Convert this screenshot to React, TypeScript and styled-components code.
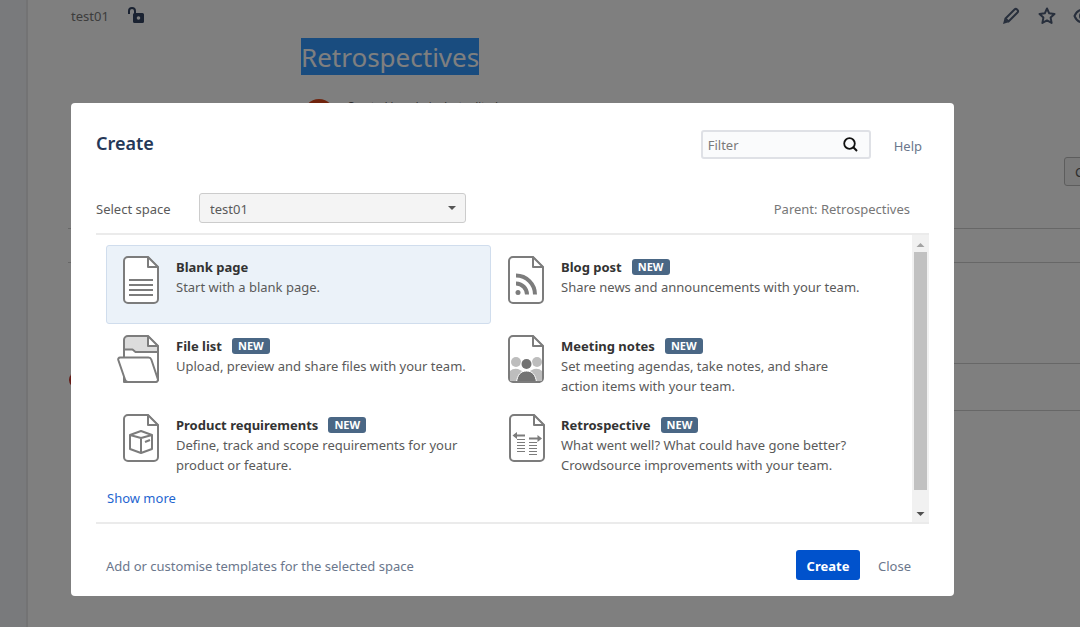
import React, { useState } from "react";
import styled, { createGlobalStyle } from "styled-components";

const GlobalStyle = createGlobalStyle`
  *, *::before, *::after { box-sizing: border-box; }
  body {
    margin: 0;
    overflow: hidden;
    background: #fff;
    color: #5a5a5a;
    font: 13px/20px "Noto Sans", "Open Sans", sans-serif;
  }
  button, input, select { font: inherit; color: inherit; }
  svg { display: block; flex: none; }
  a { text-decoration: none; }
`;

/* Page behind the dialog */

const Page = styled.div`
  display: grid;
  grid-template-columns: 28px 1fr;
  min-height: 100vh;
`;

const Sidebar = styled.aside`
  background: #f3f4f8;
  border-right: 2px solid #e6e7e9;
`;

const Main = styled.main`
  padding-left: 40px;
  min-width: 0;
  overflow: hidden;
`;

const TopBar = styled.header`
  display: flex;
  align-items: center;
  justify-content: space-between;
  height: 32px;
  padding-left: 3px;
  color: #42526e;
`;

const Breadcrumb = styled.div`
  display: flex;
  align-items: center;
  gap: 18px;

  a { color: #7a7a7a; }
  svg { margin-bottom: 2px; }
`;

const PageActions = styled.div`
  display: flex;
  gap: 16px;
  margin-right: -13px;
`;

const IconButton = styled.button`
  padding: 0;
  border: 0;
  background: none;
  color: #505f79;
`;

const PageHead = styled.div`
  padding: 6px 0 0 233px;
`;

const PageTitle = styled.h1`
  display: flex;
  margin: 0;
  font-size: 26px;
  font-weight: 400;
  color: #fff;

  span {
    padding-top: 2px;
    line-height: 35px;
    background: #3399ff;
  }
`;

const Byline = styled.div`
  display: flex;
  align-items: flex-start;
  gap: 12px;
  height: 82px;
  padding: 24px 0 0 2px;
  font-size: 11px;
  line-height: 14px;
`;

const Avatar = styled.span`
  width: 32px;
  height: 32px;
  border-radius: 50%;
  background: #e0481a;
`;

const PageTools = styled.div`
  display: flex;
  justify-content: flex-end;
  margin-right: -60px;
  padding-bottom: 42px;
`;

const ToolButton = styled.button`
  width: 76px;
  height: 29px;
  padding: 0 10px;
  border: 1px solid #bbb;
  border-radius: 3px;
  background: #f5f5f5;
  text-align: left;
`;

const Line = styled.div<{ $gap: number; $indent?: number }>`
  height: ${(p) => p.$gap}px;
  margin-left: ${(p) => p.$indent ?? 0}px;
  border-top: 1px solid #cfcfcf;
`;

const Dot = styled.div`
  width: 16px;
  height: 16px;
  margin: -48px 0 0 1px;
  border-radius: 50%;
  background: #c9372c;
`;

/* Dialog */

const Overlay = styled.div`
  position: fixed;
  inset: 0;
  padding: 103px 126px 0 71px;
  background: rgba(0, 0, 0, 0.5);
`;

const Dialog = styled.section`
  padding: 27px 25px 16px;
  border-radius: 4px;
  background: #fff;
`;

const DialogHead = styled.header`
  display: flex;
  align-items: center;
  padding-right: 7px;
`;

const DialogTitle = styled.h2`
  flex: 1;
  margin: 0;
  padding-bottom: 3px;
  font-size: 18px;
  line-height: 26px;
  font-weight: 600;
  color: #253858;
`;

const FilterBox = styled.label`
  display: flex;
  align-items: center;
  width: 170px;
  height: 29px;
  margin-right: 23px;
  padding: 0 11px 0 5px;
  border: 2px solid #dfe1e6;
  border-radius: 3px;
  background: #fafbfc;
  color: #111;

  input {
    flex: 1;
    min-width: 0;
    padding: 0;
    border: 0;
    outline: 0;
    background: none;
  }
  input::placeholder { color: #7a7a7a; opacity: 1; }
`;

const MutedLink = styled.a`
  padding-top: 2px;
  color: #6b778c;
`;

const SpaceRow = styled.div`
  display: flex;
  align-items: center;
  margin: 34px 0 10px;
  padding-right: 19px;
`;

const SpaceLabel = styled.label`
  width: 103px;
  padding-top: 2px;
`;

const SelectWrap = styled.span`
  display: grid;
  align-items: center;
  width: 267px;
  margin-right: auto;

  select, svg { grid-area: 1 / 1; }
  svg { justify-self: end; margin-right: 10px; pointer-events: none; }
`;

const SpaceSelect = styled.select`
  appearance: none;
  width: 100%;
  height: 30px;
  padding: 2px 10px 0;
  border: 1px solid #ccc;
  border-radius: 3px;
  background: #f4f4f4;
`;

const Parent = styled.span`
  padding-top: 2px;
  color: #777;
`;

const TemplatePane = styled.div`
  display: flex;
  border: solid #ebebeb;
  border-width: 2px 0;
`;

const TemplateArea = styled.div`
  flex: 1;
  min-width: 0;
  padding: 10px 36px 14px 10px;
`;

const TemplateGrid = styled.div`
  display: grid;
  grid-template-columns: 1fr 1fr;
  grid-auto-rows: 79px;
  padding-bottom: 6px;
`;

const TemplateCard = styled.button`
  display: flex;
  align-items: flex-start;
  gap: 11px;
  padding: 10px;
  border: 1px solid transparent;
  border-radius: 3px;
  background: none;
  text-align: left;

  &[aria-pressed="true"] {
    border-color: #d0dded;
    background: #ebf2f9;
  }
`;

const CardTitle = styled.span`
  display: flex;
  align-items: center;
  gap: 10px;
  padding-top: 1px;
  font-weight: 700;
  color: #333;
`;

const NewBadge = styled.span`
  padding: 0 6px;
  border-radius: 3px;
  background: #4a6785;
  color: #fff;
  font-size: 11px;
  line-height: 16px;
`;

const ShowMore = styled.a`
  display: block;
  padding-left: 1px;
  color: #1f66d0;
`;

const ScrollTrack = styled.div`
  display: flex;
  flex-direction: column;
  align-items: center;
  width: 17px;
  background: #f1f1f1;
`;

const ScrollThumb = styled.div`
  flex: 1;
  width: 13px;
  margin-bottom: 15px;
  background: #c1c1c1;
`;

const DialogFoot = styled.footer`
  display: flex;
  align-items: center;
  gap: 18px;
  padding: 26px 18px 0 10px;
`;

const FootLink = styled(MutedLink)`
  flex: 1;
`;

const CreateButton = styled.button`
  width: 64px;
  height: 30px;
  padding: 2px 0 0;
  border: 0;
  border-radius: 3px;
  background: #0052cc;
  color: #fff;
  font-weight: 700;
`;

const CloseButton = styled.button`
  padding: 2px 0 0;
  border: 0;
  background: none;
  color: #6b778c;
`;

/* Icons */

const grey = "#7c7c7c";

const Sheet = ({ fill = "#fff" }: { fill?: string }) => (
  <>
    <path
      d="M11 1H30.500L41 11.500V43a4 4 0 0 1-4 4h-26A4 4 0 0 1 7 43v-38A4 4 0 0 1 11 1z"
      fill={fill}
      stroke={grey}
      strokeWidth="2"
      strokeLinejoin="round"
    />
    <path d="M31 1V11H41z" fill="#fff" stroke={grey} strokeWidth="2" strokeLinejoin="round" />
  </>
);

const drawings: Record<string, React.ReactNode> = {
  blank: (
    <>
      <Sheet />
      <path d="M12 24h24M12 29h24M12 34h24M12 39h24" stroke={grey} strokeWidth="2" />
    </>
  ),
  blog: (
    <>
      <Sheet />
      <g fill="none" stroke={grey} strokeWidth="4">
        <path d="M14 19.500a19 19 0 0 1 19 19" />
        <path d="M14 27.500a11 11 0 0 1 11 11" />
      </g>
      <circle cx="16" cy="36.500" r="2.500" fill={grey} />
    </>
  ),
  files: (
    <>
      <Sheet fill="#dcdcdc" />
      <path
        d="M7 14.500h8.500l3 2.500H41V45l-8 2H7z"
        fill="#fff"
        stroke={grey}
        strokeWidth="2"
        strokeLinejoin="round"
      />
      <path
        d="M3 22.500h28.500a3 3 0 0 1 2.800 2L40.800 44a2.200 2.200 0 0 1-2.200 3H11a3 3 0 0 1-2.900-2.200L1.300 25a1.900 1.900 0 0 1 1.700-2.500z"
        fill="#fff"
        stroke={grey}
        strokeWidth="2"
        strokeLinejoin="round"
      />
    </>
  ),
  meeting: (
    <>
      <Sheet />
      <g fill="#bdbdbd">
        <circle cx="14" cy="27" r="5" />
        <circle cx="35" cy="27" r="5" />
        <path d="M8 46V36q3-3 8-2l4 2-6 10zM40 46V36q-3-3-8-2l-4 2 6 10z" />
      </g>
      <circle cx="24.500" cy="29" r="6" fill="#fff" />
      <circle cx="24.500" cy="29" r="5" fill="#737373" />
      <path d="M14.500 47c1-7 4-11 10-11s9 4 10 11z" fill="#737373" stroke="#fff" />
      <path d="M11 47h27" stroke={grey} strokeWidth="2" />
    </>
  ),
  product: (
    <>
      <Sheet />
      <g fill="none" stroke={grey} strokeWidth="2" strokeLinejoin="round">
        <path d="M13 21l11-4 11 4v14l-11 4-11-4zM13 21l11 3 11-3M24 24v15" />
        <path d="M28 28l5-2" />
      </g>
    </>
  ),
  retro: (
    <g transform="translate(1 0)">
      <Sheet />
      <g stroke={grey} strokeWidth="2">
        <path d="M11 21.500h11M26 24.500h11" />
      </g>
      <path d="M9.500 21.500l4.500-3.500v7zM39 24.500l-4.500-3.500v7z" fill={grey} />
      <path
        d="M14 25.500h8M14 28.500h8M14 31.500h8M14 34.500h8M14 37.500h8M26 28.500h8M26 31.500h8M26 34.500h8M26 37.500h8M26 40.500h8"
        stroke={grey}
        strokeWidth="1"
      />
    </g>
  ),
};

const LockOpen = () => (
  <svg width="18" height="18" viewBox="0 0 18 18" aria-hidden="true">
    <path d="M2 8V5a3 3 0 0 1 6 0v4" fill="none" stroke="#344563" strokeWidth="2" />
    <path
      d="M7.500 7h8A1.500 1.500 0 0 1 17 8.500v7a1.500 1.500 0 0 1-1.500 1.500h-8A1.500 1.500 0 0 1 6 15.500v-7A1.500 1.500 0 0 1 7.500 7zm4 3.200a1.800 1.800 0 1 0 0 3.600 1.800 1.800 0 0 0 0-3.600z"
      fill="#344563"
    />
  </svg>
);

const Pencil = () => (
  <svg width="20" height="20" viewBox="0 0 20 20" aria-hidden="true">
    <path
      d="M4.500 12.500L13.500 3.500a1.800 1.800 0 0 1 2.500 0l.5.500a1.800 1.800 0 0 1 0 2.500L7.500 15.500z"
      fill="none"
      stroke="currentColor"
      strokeWidth="2"
      strokeLinejoin="round"
    />
    <path d="M3.500 12.500l4 3.800L2 18z" fill="currentColor" />
  </svg>
);

const Star = () => (
  <svg width="20" height="20" viewBox="0 0 20 20" aria-hidden="true">
    <path
      d="M10 2.500l2.200 4.800 5.300.7-3.900 3.600 1 5.300L10 14.400l-4.600 2.500 1-5.300L2.500 8l5.300-.7z"
      fill="none"
      stroke="currentColor"
      strokeWidth="2"
      strokeLinejoin="round"
    />
  </svg>
);

const Eye = () => (
  <svg width="20" height="20" viewBox="0 0 20 20" aria-hidden="true">
    <path
      d="M1.500 10C5 1.500 15 1.500 18.500 10 15 18.500 5 18.500 1.500 10z"
      fill="none"
      stroke="currentColor"
      strokeWidth="2"
    />
    <circle cx="10" cy="10" r="4" fill="currentColor" />
  </svg>
);

const Search = () => (
  <svg width="15" height="15" viewBox="0 0 15 15" aria-hidden="true">
    <circle cx="6.500" cy="6.500" r="5.300" fill="none" stroke="currentColor" strokeWidth="1.800" />
    <path d="M10.300 10.300L14 14" stroke="currentColor" strokeWidth="2" />
  </svg>
);

const Caret = () => (
  <svg width="8" height="4" viewBox="0 0 8 4" aria-hidden="true">
    <path d="M0 0h8L4 4z" fill="#555" />
  </svg>
);

const ScrollArrow = ({ up = false }: { up?: boolean }) => (
  <svg width="17" height="17" viewBox="0 0 17 17" aria-hidden="true">
    {up ? <path d="M4.500 12h8l-4-4z" fill="#a3a3a3" /> : <path d="M4.500 7h8l-4 4z" fill="#505050" />}
  </svg>
);

interface Template {
  icon: string;
  title: string;
  text: string;
  isNew?: boolean;
}

const templates: Template[] = [
  { icon: "blank", title: "Blank page", text: "Start with a blank page." },
  { icon: "blog", title: "Blog post", text: "Share news and announcements with your team.", isNew: true },
  { icon: "files", title: "File list", text: "Upload, preview and share files with your team.", isNew: true },
  {
    icon: "meeting",
    title: "Meeting notes",
    text: "Set meeting agendas, take notes, and share action items with your team.",
    isNew: true,
  },
  {
    icon: "product",
    title: "Product requirements",
    text: "Define, track and scope requirements for your product or feature.",
    isNew: true,
  },
  {
    icon: "retro",
    title: "Retrospective",
    text: "What went well? What could have gone better? Crowdsource improvements with your team.",
    isNew: true,
  },
];

export default function App() {
  const [selected, setSelected] = useState("blank");

  return (
    <>
      <GlobalStyle />
      <Page>
        <Sidebar />
        <Main>
          <TopBar>
            <Breadcrumb>
              <a href="#space">test01</a>
              <LockOpen />
            </Breadcrumb>
            <PageActions>
              <IconButton aria-label="Edit"><Pencil /></IconButton>
              <IconButton aria-label="Favourite"><Star /></IconButton>
              <IconButton aria-label="Watch"><Eye /></IconButton>
            </PageActions>
          </TopBar>
          <PageHead>
            <PageTitle><span>Retrospectives</span></PageTitle>
            <Byline>
              <Avatar />
              <span>Created by admin, last edited</span>
            </Byline>
          </PageHead>
          <PageTools>
            <ToolButton>Create</ToolButton>
          </PageTools>
          <Line $gap={34} />
          <Line $gap={101} />
          <Line $gap={47} $indent={233} />
          <Line $gap={10} $indent={233} />
          <Dot />
        </Main>
      </Page>

      <Overlay>
        <Dialog role="dialog" aria-labelledby="dialog-title">
          <DialogHead>
            <DialogTitle id="dialog-title">Create</DialogTitle>
            <FilterBox>
              <input type="text" placeholder="Filter" aria-label="Filter" />
              <Search />
            </FilterBox>
            <MutedLink href="#help">Help</MutedLink>
          </DialogHead>

          <SpaceRow>
            <SpaceLabel htmlFor="space">Select space</SpaceLabel>
            <SelectWrap>
              <SpaceSelect id="space" defaultValue="test01">
                <option>test01</option>
              </SpaceSelect>
              <Caret />
            </SelectWrap>
            <Parent>Parent: Retrospectives</Parent>
          </SpaceRow>

          <TemplatePane>
            <TemplateArea>
              <TemplateGrid>
                {templates.map((t) => (
                  <TemplateCard
                    key={t.icon}
                    type="button"
                    aria-pressed={selected === t.icon}
                    onClick={() => setSelected(t.icon)}
                  >
                    <svg width="48" height="48" viewBox="0 0 48 48" aria-hidden="true">
                      {drawings[t.icon]}
                    </svg>
                    <span>
                      <CardTitle>
                        {t.title}
                        {t.isNew && <NewBadge>NEW</NewBadge>}
                      </CardTitle>
                      {t.text}
                    </span>
                  </TemplateCard>
                ))}
              </TemplateGrid>
              <ShowMore href="#more">Show more</ShowMore>
            </TemplateArea>
            <ScrollTrack>
              <ScrollArrow up />
              <ScrollThumb />
              <ScrollArrow />
            </ScrollTrack>
          </TemplatePane>

          <DialogFoot>
            <FootLink href="#templates">Add or customise templates for the selected space</FootLink>
            <CreateButton type="button">Create</CreateButton>
            <CloseButton type="button">Close</CloseButton>
          </DialogFoot>
        </Dialog>
      </Overlay>
    </>
  );
}
